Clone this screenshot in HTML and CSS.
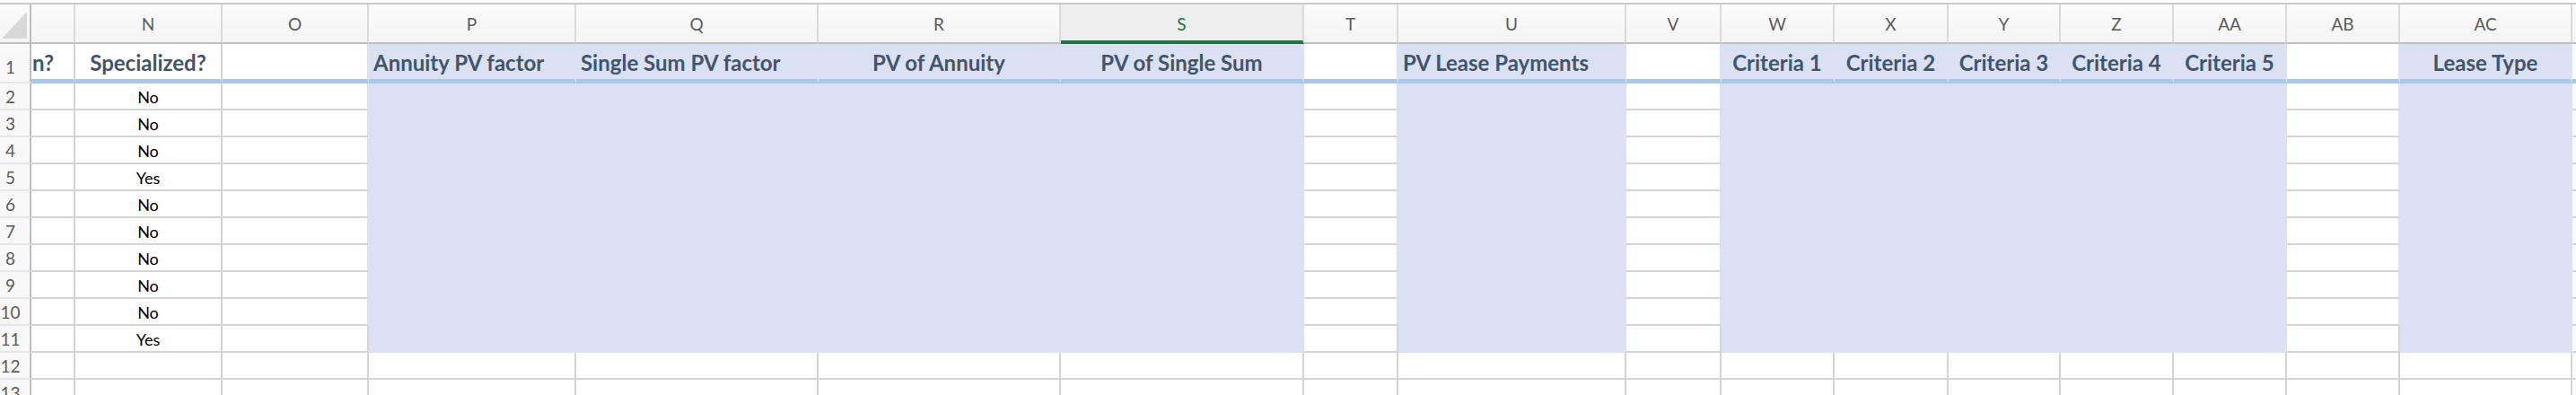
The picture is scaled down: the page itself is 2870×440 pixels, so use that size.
FILE: index.html
```html
<!DOCTYPE html>
<html lang="en">
<head>
<meta charset="utf-8">
<title>Lease Classification Sheet</title>
<link rel="stylesheet" href="styles.css">
</head>
<body>
<div class="sheet">
  <div class="row colhdr">
    <div class="h corner"><svg class="tri" viewBox="0 0 28 30" width="28" height="30"><polygon points="0,30 28,0 28,30" fill="#d8d8d8"/></svg></div>
    <div class="h"></div>
    <div class="h">N</div>
    <div class="h">O</div>
    <div class="h">P</div>
    <div class="h">Q</div>
    <div class="h">R</div>
    <div class="h sel">S</div>
    <div class="h">T</div>
    <div class="h">U</div>
    <div class="h">V</div>
    <div class="h">W</div>
    <div class="h">X</div>
    <div class="h">Y</div>
    <div class="h">Z</div>
    <div class="h">AA</div>
    <div class="h">AB</div>
    <div class="h">AC</div>
    <div class="h last"></div>
  </div>

  <div class="row r1">
    <div class="rh rh1">1</div>
    <div class="c hd clip">n?</div>
    <div class="c hd ctr">Specialized?</div>
    <div class="c hd bf"></div>
    <div class="c hd f">Annuity PV factor</div>
    <div class="c hd f">Single Sum PV factor</div>
    <div class="c hd f ctr">PV of Annuity</div>
    <div class="c hd f ctr">PV of Single Sum</div>
    <div class="c hd bf"></div>
    <div class="c hd f">PV Lease Payments</div>
    <div class="c hd bf"></div>
    <div class="c hd f ctr">Criteria 1</div>
    <div class="c hd f ctr">Criteria 2</div>
    <div class="c hd f ctr">Criteria 3</div>
    <div class="c hd f ctr">Criteria 4</div>
    <div class="c hd f ctr">Criteria 5</div>
    <div class="c hd bf"></div>
    <div class="c hd f ctr">Lease Type</div>
    <div class="c hd last"></div>
  </div>

  <div class="row">
    <div class="rh">2</div><div class="c"></div><div class="c ctr">No</div><div class="c bf"></div>
    <div class="c f"></div><div class="c f"></div><div class="c f"></div><div class="c f"></div>
    <div class="c bf"></div><div class="c f"></div><div class="c bf"></div>
    <div class="c f"></div><div class="c f"></div><div class="c f"></div><div class="c f"></div><div class="c f"></div>
    <div class="c bf"></div><div class="c f"></div><div class="c last"></div>
  </div>
  <div class="row">
    <div class="rh">3</div><div class="c"></div><div class="c ctr">No</div><div class="c bf"></div>
    <div class="c f"></div><div class="c f"></div><div class="c f"></div><div class="c f"></div>
    <div class="c bf"></div><div class="c f"></div><div class="c bf"></div>
    <div class="c f"></div><div class="c f"></div><div class="c f"></div><div class="c f"></div><div class="c f"></div>
    <div class="c bf"></div><div class="c f"></div><div class="c last"></div>
  </div>
  <div class="row">
    <div class="rh">4</div><div class="c"></div><div class="c ctr">No</div><div class="c bf"></div>
    <div class="c f"></div><div class="c f"></div><div class="c f"></div><div class="c f"></div>
    <div class="c bf"></div><div class="c f"></div><div class="c bf"></div>
    <div class="c f"></div><div class="c f"></div><div class="c f"></div><div class="c f"></div><div class="c f"></div>
    <div class="c bf"></div><div class="c f"></div><div class="c last"></div>
  </div>
  <div class="row">
    <div class="rh">5</div><div class="c"></div><div class="c ctr">Yes</div><div class="c bf"></div>
    <div class="c f"></div><div class="c f"></div><div class="c f"></div><div class="c f"></div>
    <div class="c bf"></div><div class="c f"></div><div class="c bf"></div>
    <div class="c f"></div><div class="c f"></div><div class="c f"></div><div class="c f"></div><div class="c f"></div>
    <div class="c bf"></div><div class="c f"></div><div class="c last"></div>
  </div>
  <div class="row">
    <div class="rh">6</div><div class="c"></div><div class="c ctr">No</div><div class="c bf"></div>
    <div class="c f"></div><div class="c f"></div><div class="c f"></div><div class="c f"></div>
    <div class="c bf"></div><div class="c f"></div><div class="c bf"></div>
    <div class="c f"></div><div class="c f"></div><div class="c f"></div><div class="c f"></div><div class="c f"></div>
    <div class="c bf"></div><div class="c f"></div><div class="c last"></div>
  </div>
  <div class="row">
    <div class="rh">7</div><div class="c"></div><div class="c ctr">No</div><div class="c bf"></div>
    <div class="c f"></div><div class="c f"></div><div class="c f"></div><div class="c f"></div>
    <div class="c bf"></div><div class="c f"></div><div class="c bf"></div>
    <div class="c f"></div><div class="c f"></div><div class="c f"></div><div class="c f"></div><div class="c f"></div>
    <div class="c bf"></div><div class="c f"></div><div class="c last"></div>
  </div>
  <div class="row">
    <div class="rh">8</div><div class="c"></div><div class="c ctr">No</div><div class="c bf"></div>
    <div class="c f"></div><div class="c f"></div><div class="c f"></div><div class="c f"></div>
    <div class="c bf"></div><div class="c f"></div><div class="c bf"></div>
    <div class="c f"></div><div class="c f"></div><div class="c f"></div><div class="c f"></div><div class="c f"></div>
    <div class="c bf"></div><div class="c f"></div><div class="c last"></div>
  </div>
  <div class="row">
    <div class="rh">9</div><div class="c"></div><div class="c ctr">No</div><div class="c bf"></div>
    <div class="c f"></div><div class="c f"></div><div class="c f"></div><div class="c f"></div>
    <div class="c bf"></div><div class="c f"></div><div class="c bf"></div>
    <div class="c f"></div><div class="c f"></div><div class="c f"></div><div class="c f"></div><div class="c f"></div>
    <div class="c bf"></div><div class="c f"></div><div class="c last"></div>
  </div>
  <div class="row">
    <div class="rh">10</div><div class="c"></div><div class="c ctr">No</div><div class="c bf"></div>
    <div class="c f"></div><div class="c f"></div><div class="c f"></div><div class="c f"></div>
    <div class="c bf"></div><div class="c f"></div><div class="c bf"></div>
    <div class="c f"></div><div class="c f"></div><div class="c f"></div><div class="c f"></div><div class="c f"></div>
    <div class="c bf"></div><div class="c f"></div><div class="c last"></div>
  </div>
  <div class="row">
    <div class="rh">11</div><div class="c"></div><div class="c ctr">Yes</div><div class="c"></div>
    <div class="c f"></div><div class="c f"></div><div class="c f"></div><div class="c f"></div>
    <div class="c"></div><div class="c f"></div><div class="c"></div>
    <div class="c f"></div><div class="c f"></div><div class="c f"></div><div class="c f"></div><div class="c f"></div>
    <div class="c"></div><div class="c f"></div><div class="c last"></div>
  </div>
  <div class="row">
    <div class="rh">12</div><div class="c"></div><div class="c"></div><div class="c"></div>
    <div class="c"></div><div class="c"></div><div class="c"></div><div class="c"></div>
    <div class="c"></div><div class="c"></div><div class="c"></div>
    <div class="c"></div><div class="c"></div><div class="c"></div><div class="c"></div><div class="c"></div>
    <div class="c"></div><div class="c"></div><div class="c last"></div>
  </div>
  <div class="row">
    <div class="rh">13</div><div class="c"></div><div class="c"></div><div class="c"></div>
    <div class="c"></div><div class="c"></div><div class="c"></div><div class="c"></div>
    <div class="c"></div><div class="c"></div><div class="c"></div>
    <div class="c"></div><div class="c"></div><div class="c"></div><div class="c"></div><div class="c"></div>
    <div class="c"></div><div class="c"></div><div class="c last"></div>
  </div>
</div>
</body>
</html>
```

FILE: styles.css
```css
* { box-sizing: border-box; }

html, body {
  margin: 0;
  padding: 0;
  background: #ffffff;
  overflow: hidden;
}

.sheet {
  width: 2870px;
  height: 440px;
  overflow: hidden;
  font-family: Lato, "Open Sans", "Liberation Sans", sans-serif;
}

.row {
  display: grid;
  grid-template-columns: 35px 49px 164px 163px 231px 270px 270px 271px 105px 254px 106px 126px 127px 125px 126px 126px 126px 192px 4px;
  height: 30px;
}

/* column header strip */
.colhdr {
  height: 46px;
  margin-top: 3px;
  border-top: 2px solid #c9c9c9;
  height: 46px;
}

.h {
  height: 44px;
  background: linear-gradient(#fbfbfb, #f4f4f4);
  border-right: 2px solid #dadada;
  border-bottom: 2px solid #bfbfbf;
  display: flex;
  align-items: center;
  justify-content: center;
  font-size: 19px;
  line-height: 19px;
  color: #5b5b5b;
  padding-top: 1px;
}

.h.corner {
  border-right-color: #bdbdbd;
  position: relative;
  align-items: flex-end;
  justify-content: flex-start;
  padding: 0 0 4px 2px;
}

.tri { display: block; }

.h.sel {
  background: #eeeeee;
  color: #217346;
  border-bottom: 4px solid #217346;
  padding-top: 3px;
}

.h.last { border-right: 0; }

/* row headers */
.rh {
  background: #f8f8f8;
  border-right: 2px solid #bdbdbd;
  border-bottom: 2px solid #e6e6e6;
  display: flex;
  align-items: flex-end;
  justify-content: center;
  padding: 0 10px 4px 0;
  font-size: 19px;
  line-height: 19px;
  color: #5b5b5b;
  white-space: nowrap;
}

.rh.rh1 { padding-bottom: 7px; }

/* cells */
.c {
  border-right: 2px solid #d4d4d4;
  border-bottom: 2px solid #d4d4d4;
  display: flex;
  align-items: flex-end;
  justify-content: flex-start;
  padding: 0 5px 4px 5px;
  font-size: 18px;
  line-height: 18px;
  color: #000000;
  white-space: nowrap;
  overflow: hidden;
}

.c.ctr { justify-content: center; }

.c.f {
  background: #d9e1f2;
  border-right-color: #d9e1f2;
  border-bottom-color: #d9e1f2;
}

.c.bf { border-right-color: #d9e1f2; }

.c.last { border-right: 0; }

/* heading row */
.r1 { height: 44px; }

.c.hd {
  border-bottom: 5px solid #a9c8e8;
  font-size: 24px;
  line-height: 24px;
  font-weight: 700;
  color: #44546a;
  padding-bottom: 6px;
}

.c.hd.f { border-bottom-color: #a9c8e8; }

.c.clip {
  justify-content: flex-end;
  padding-right: 22px;
  padding-left: 0;
}
```
